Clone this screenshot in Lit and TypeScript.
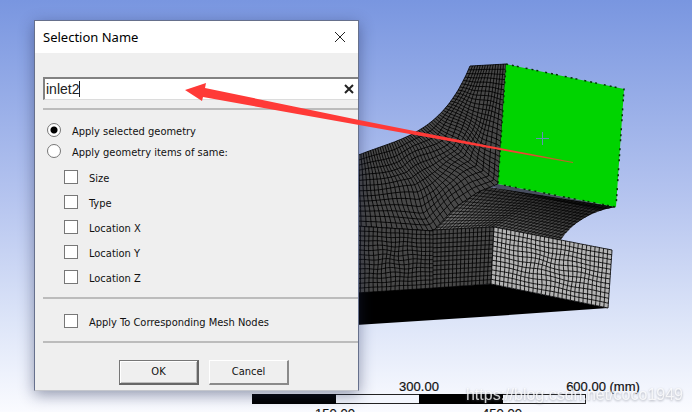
import { LitElement, html, css, svg } from "lit";
import { customElement, property, state } from "lit/decorators.js";

type Point = [number, number];
type Edge = (t: number) => Point;

const mix = (a: Point, b: Point, t: number): Point => [
  a[0] + (b[0] - a[0]) * t,
  a[1] + (b[1] - a[1]) * t,
];

const line = (a: Point, b: Point): Edge => (t) => mix(a, b, t);

const cubic = (a: Point, b: Point, c: Point, d: Point): Edge => (t) => {
  const ab = mix(a, b, t);
  const bc = mix(b, c, t);
  const cd = mix(c, d, t);
  return mix(mix(ab, bc, t), mix(bc, cd, t), t);
};

/** Evenly paced path through several points. */
const chain = (...pts: Point[]): Edge => {
  const lengths = pts.slice(1).map((p, i) => Math.hypot(p[0] - pts[i][0], p[1] - pts[i][1]));
  const total = lengths.reduce((sum, n) => sum + n, 0);
  return (t) => {
    let rest = t * total;
    for (let i = 0; i < lengths.length; i++) {
      if (rest <= lengths[i] || i === lengths.length - 1) {
        return mix(pts[i], pts[i + 1], Math.min(1, rest / lengths[i]));
      }
      rest -= lengths[i];
    }
    return pts[0];
  };
};

const f = (p: Point) => `${p[0].toFixed(1)} ${p[1].toFixed(1)}`;

/** Closed outline of the surface ruled between two edges. */
const outline = (a: Edge, b: Edge): string => {
  const pts: string[] = [];
  for (let i = 0; i <= 60; i++) pts.push(f(a(i / 60)));
  for (let i = 60; i >= 0; i--) pts.push(f(b(i / 60)));
  return `M${pts.join("L")}Z`;
};

/** Element edges of a surface: `across` lines joining the edges, `along` lines following them. */
const grid = (a: Edge, b: Edge, across: number, along: number, wobble = 0): string => {
  const at = (u: number, v: number): Point => {
    const p = mix(a(u), b(u), v);
    const fade = Math.sin(Math.PI * v) * Math.sin(Math.PI * u) * wobble;
    return [
      p[0] + fade * Math.sin(v * 9 + u * 13),
      p[1] + fade * Math.cos(u * 17 - v * 7),
    ];
  };
  let d = "";
  for (let i = 0; i <= across; i++) {
    const pts = Array.from({ length: 17 }, (_, k) => f(at(i / across, k / 16)));
    d += `M${pts.join("L")}`;
  }
  for (let j = 0; j <= along; j++) {
    const pts = Array.from({ length: 61 }, (_, k) => f(at(k / 60, j / along)));
    d += `M${pts.join("L")}`;
  }
  return d;
};

interface Surface {
  a: Edge;
  b: Edge;
  across: number;
  along: number;
  tone: string;
  wobble?: number;
}

const surfaces: Surface[] = [
  {
    a: line([470, 184], [616, 207]),
    b: chain([428, 231], [494, 227], [561, 241]),
    across: 38,
    along: 14,
    tone: "arch",
  },
  {
    a: cubic([470, 66], [441, 136], [400, 138], [356, 156]),
    b: chain([506, 64], [498, 184], [478, 192], [456, 207], [433, 231], [356, 226]),
    across: 54,
    along: 14,
    tone: "body",
    wobble: 3,
  },
  {
    a: line([356, 226], [434, 231]),
    b: line([356, 293], [434, 288]),
    across: 18,
    along: 14,
    tone: "body",
    wobble: 1,
  },
  {
    a: line([433, 230], [494, 227]),
    b: line([433, 288], [491, 284]),
    across: 15,
    along: 13,
    tone: "body",
  },
  {
    a: line([494, 227], [612, 250]),
    b: line([491, 284], [608, 308]),
    across: 28,
    along: 12,
    tone: "lit",
    wobble: 1,
  },
];

@customElement("model-view")
class ModelView extends LitElement {
  static styles = css`
    :host {
      display: block;
    }
    .scene {
      display: block;
      width: 100%;
      height: 100%;
    }
    .body {
      fill: #484848;
    }
    .arch {
      fill: url(#archTone);
    }
    .lit {
      fill: #b4b4b4;
    }
    .mesh {
      fill: none;
      stroke: #000;
      stroke-opacity: 0.85;
    }
    .fine {
      stroke-opacity: 0.7;
    }
    .picked {
      fill: #00d400;
    }
    .nodes {
      fill: none;
      stroke: #043004;
      stroke-width: 1.5;
      stroke-dasharray: 2 4 2 3 2 7;
    }
    .cross {
      fill: none;
      stroke: #5f92b4;
    }
    .ruler {
      fill: #f3f6fd;
      stroke: #222;
    }
    .label {
      font: 13px "Liberation Sans", Arial, sans-serif;
      fill: #111;
      stroke: #111;
      stroke-width: 0.2;
      text-anchor: middle;
    }
    .watermark {
      font: 16px "Liberation Sans", Arial, sans-serif;
      fill: #fff;
      fill-opacity: 0.8;
      text-anchor: end;
      filter: drop-shadow(0 1px 1px rgba(90, 95, 110, 0.6));
    }
  `;

  render() {
    return html`
      <svg class="scene" viewBox="0 0 692 412" preserveAspectRatio="xMinYMin meet" role="img" aria-label="Meshed model">
        <defs>
          <linearGradient id="archTone" gradientUnits="userSpaceOnUse" x1="520" y1="188" x2="500" y2="236">
            <stop offset="0" stop-color="#2c2c2c" />
            <stop offset="1" stop-color="#686868" />
          </linearGradient>
          <clipPath id="archClip">
            <path d="M470 184L616 207C592 211 572 222 560 241L494 227L428 231Z" />
          </clipPath>
        </defs>
        <path d="M356 292L491 284L608 308L480 317L356 325Z" />
        ${surfaces.map((s) => {
          const mesh = svg`
            <path class=${s.tone} d=${outline(s.a, s.b)} />
            <path class="mesh ${s.tone === "arch" ? "fine" : ""}" d=${grid(s.a, s.b, s.across, s.along, s.wobble)} />`;
          return s.tone === "arch" ? svg`<g clip-path="url(#archClip)">${mesh}</g>` : mesh;
        })}
        <path d="M498 184L616 207L600 210Q540 198 492 187Z" opacity="0.6" />
        <path class="picked" d="M506 64L624 89L616 207L498 184Z" />
        <path class="nodes" d="M506 64L624 89L616 207L498 184Z" />
        <path class="cross" d="M536 138.500H549M542.500 132V145" />

        <rect class="ruler" x="252.500" y="394.500" width="333" height="9" />
        <path d="M252 394H336V404H252ZM419 394H503V404H419Z" />
        <text class="label" x="253" y="391">0.00</text>
        <text class="label" x="419" y="391">300.00</text>
        <text class="label" x="603" y="391">600.00 (mm)</text>
        <text class="label" x="335" y="418">150.00</text>
        <text class="label" x="502" y="418">450.00</text>
        <text class="watermark" x="683" y="400">https://blog.csdn.net/coco1949</text>
      </svg>
    `;
  }
}

@customElement("selection-dialog")
class SelectionDialog extends LitElement {
  @property() name = "";
  @state() private scope = "selected";

  private criteria = ["Size", "Type", "Location X", "Location Y", "Location Z"];

  static styles = css`
    :host {
      display: flex;
      flex-direction: column;
      box-sizing: border-box;
      border: 1px solid #66708c;
      border-bottom-color: #c4c6cc;
      background: #efefef;
      box-shadow: 0 4px 14px rgba(30, 40, 80, 0.45);
      font: 11px/16px "DejaVu Sans Condensed", Tahoma, "DejaVu Sans", sans-serif;
      color: #111;
    }
    .titlebar {
      display: flex;
      align-items: center;
      justify-content: space-between;
      height: 32px;
      padding: 0 12px 0 8px;
      background: #fff;
    }
    .title {
      margin: 0;
      font: 13px/18px "Noto Sans", "Segoe UI", sans-serif;
      color: #000;
    }
    .icon-button {
      display: flex;
      padding: 0;
      border: 0;
      background: none;
    }
    .icon {
      fill: none;
      stroke: #222;
    }
    .heavy {
      stroke-width: 2;
    }
    .content {
      display: flex;
      flex-direction: column;
      padding: 24px 0 5px 8px;
    }
    .field {
      display: flex;
      align-items: center;
      box-sizing: border-box;
      height: 23px;
      padding-right: 4px;
      border: solid #828282;
      border-width: 2px 0 0 2px;
      border-bottom: 1px solid #dcdcdc;
      background: #fff;
    }
    .entry-wrap {
      display: flex;
      flex: 1;
      align-items: center;
    }
    .entry {
      flex: none;
      field-sizing: content;
      padding: 0 0 0 1px;
      border: 0;
      outline: 0;
      background: none;
      font: 14px/18px "Liberation Sans", Arial, sans-serif;
      color: #222;
    }
    .caret {
      width: 1px;
      height: 16px;
      background: #222;
    }
    .rule {
      width: 100%;
      height: 2px;
      margin: 0;
      border: 0;
      background: #bcbcbc;
    }
    .first {
      margin-top: 8px;
    }
    .last {
      margin-top: 8px;
    }
    .scopes,
    .criteria {
      display: flex;
      flex-direction: column;
    }
    .scopes {
      padding: 9px 0 0 4px;
    }
    .criteria {
      padding: 3px 0 0 21px;
    }
    .mesh {
      padding: 11px 0 10px 21px;
    }
    .option {
      display: flex;
      align-items: center;
      height: 21px;
    }
    .criteria .option {
      height: 25px;
    }
    .text {
      padding: 5px 0 0 11px;
    }
    .tick,
    .radio {
      appearance: none;
      flex: none;
      box-sizing: border-box;
      width: 14px;
      height: 14px;
      margin: 0;
      border: 1px solid #777;
      background: #fff;
    }
    .radio {
      border-radius: 50%;
    }
    .radio:checked {
      background: radial-gradient(circle, #000 0 3px, #fff 4px);
    }
    .tick:checked {
      background: #444;
    }
    .actions {
      display: flex;
      gap: 10px;
      padding: 17px 0 0 76px;
    }
    .action {
      width: 80px;
      height: 25px;
      padding: 0;
      border: solid;
      border-width: 1px 2px 2px 1px;
      border-color: #fff #8a8a8a #8a8a8a #fff;
      background: #efefef;
      font: inherit;
      color: inherit;
    }
    .default {
      border-color: #777 #666 #666 #777;
      box-shadow: inset 1px 1px #fff, inset -1px -1px #bbb;
    }
  `;

  render() {
    return html`
      <header class="titlebar">
        <h1 class="title">Selection Name</h1>
        <button class="icon-button" aria-label="Close">
          <svg class="icon" width="12" height="12" viewBox="0 0 12 12"><path d="M1 1L11 11M11 1L1 11" /></svg>
        </button>
      </header>
      <div class="content">
        <div class="field">
          <div class="entry-wrap">
            <input class="entry" type="text" aria-label="Selection name" .value=${this.name} />
            <span class="caret"></span>
          </div>
          <button class="icon-button" aria-label="Clear">
            <svg class="icon heavy" width="10" height="10" viewBox="0 0 10 10"><path d="M1 1L9 9M9 1L1 9" /></svg>
          </button>
        </div>
        <hr class="rule first" />
        <div class="scopes" role="radiogroup" aria-label="Scope">
          ${[
            ["selected", "Apply selected geometry"],
            ["same", "Apply geometry items of same:"],
          ].map(
            ([value, text]) => html`
              <label class="option">
                <input
                  class="radio"
                  type="radio"
                  name="scope"
                  .checked=${this.scope === value}
                  @change=${() => (this.scope = value)}
                />
                <span class="text">${text}</span>
              </label>
            `,
          )}
        </div>
        <div class="criteria">
          ${this.criteria.map(
            (text) => html`
              <label class="option"><input class="tick" type="checkbox" /><span class="text">${text}</span></label>
            `,
          )}
        </div>
        <hr class="rule last" />
        <div class="mesh">
          <label class="option">
            <input class="tick" type="checkbox" /><span class="text">Apply To Corresponding Mesh Nodes</span>
          </label>
        </div>
        <hr class="rule" />
        <div class="actions">
          <button class="action default">OK</button>
          <button class="action">Cancel</button>
        </div>
      </div>
    `;
  }
}

@customElement("app-root")
class AppRoot extends LitElement {
  static styles = css`
    :host {
      display: block;
      position: relative;
      min-height: 100vh;
      overflow: hidden;
      background: linear-gradient(#7996e0, #b5c4ef 48%, #dde5f8 78%, #fafbff);
    }
    .model {
      height: 100vh;
    }
    .dialog {
      position: absolute;
      left: 34px;
      top: 20px;
      width: 325px;
    }
    .pointer {
      position: absolute;
      inset: 0;
      width: 100%;
      height: 100%;
      pointer-events: none;
    }
  `;

  render() {
    return html`
      <model-view class="model"></model-view>
      <selection-dialog class="dialog" name="inlet2"></selection-dialog>
      <svg class="pointer" viewBox="0 0 692 412" preserveAspectRatio="xMinYMin meet" aria-hidden="true">
        <defs>
          <linearGradient id="fade" gradientUnits="userSpaceOnUse" x1="500" y1="0" x2="574" y2="0">
            <stop offset="0" stop-color="#ff3a37" />
            <stop offset="1" stop-color="#ff3a37" stop-opacity="0.7" />
          </linearGradient>
        </defs>
        <path fill="url(#fade)" d="M185 90L206 83L205 88L359 120L500 148L573 162L573 163L500 150L359 125L203 97L202 101Z" />
      </svg>
    `;
  }
}
